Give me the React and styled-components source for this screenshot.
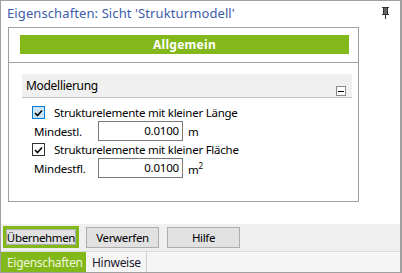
import React, { useState } from 'react'
import styled, { createGlobalStyle, css } from 'styled-components'

const GREEN = '#83b81a'

const GlobalStyle = createGlobalStyle`
    html, body { margin: 0; padding: 0; background: #fff; }
    body {
        font-family: "Noto Sans", "Open Sans", sans-serif;
        font-size: 12px;
        color: #000;
    }
    * { box-sizing: border-box; }
`

const Window = styled.div`
    width: 402px;
    height: 273px;
    border: 1px solid #a0a0a0;
    border-right-width: 2px;
    display: flex;
    flex-direction: column;
    background: #fff;
    overflow: hidden;
`

const TitleBar = styled.div`
    height: 26px;
    flex: none;
    display: flex;
    align-items: center;
    justify-content: space-between;
    padding: 0 11px 2px 6px;
`

const Title = styled.div`
    font-size: 13px;
    letter-spacing: 0.1px;
    color: #3d5ba8;
`

const Body = styled.div`
    flex: 1;
    padding: 0 41px 0 7px;
`

const Panel = styled.div`
    height: 175px;
    border: 1px solid #a0a0a0;
    display: flex;
    flex-direction: column;
`

const Banner = styled.div`
    margin: 7px 9px 0 11px;
    height: 19px;
    background: ${GREEN};
    color: #fff;
    font-weight: bold;
    font-size: 12px;
    display: flex;
    align-items: center;
    justify-content: center;
    letter-spacing: 0.3px;
`

const Divider = styled.div`
    margin-top: 8px;
    border-top: 1px solid #a0a0a0;
`

const Group = styled.div`
    margin: 11px 6px 0 13px;
`

const GroupHeader = styled.div`
    height: 24px;
    background: #f0f0f0;
    border-bottom: 1px solid #c4c4c4;
    display: flex;
    align-items: flex-start;
    justify-content: space-between;
    padding: 3px 6px 0 4px;
    font-size: 12px;
    letter-spacing: -0.3px;
`

const Collapse = styled.span`
    margin-top: 9px;
    width: 10px;
    height: 10px;
    border: 1px solid #8a8a8a;
    background: #fff;
    display: flex;
    align-items: center;
    justify-content: center;
    &::after {
        content: '';
        width: 6px;
        height: 1px;
        background: #000;
    }
`

const Rows = styled.div`
    padding: 7px 0 0 10px;
    display: flex;
    flex-direction: column;
`

const CheckRow = styled.label`
    display: flex;
    align-items: center;
    height: 15px;
    gap: 9px;
    font-size: 11.5px;
    letter-spacing: -0.25px;
`

const Box = styled.span`
    width: 13px;
    height: 13px;
    border: 1px solid #333;
    background: #fff;
    display: flex;
    align-items: center;
    justify-content: center;
    ${(props) => props.focused && css`
        border-color: #0078d7;
        background: #cce4f7;
    `}
`

const FieldRow = styled.div`
    display: flex;
    align-items: center;
    height: 20px;
    margin: 1px 0 1px 2px;
    font-size: 11.5px;
    letter-spacing: -0.2px;
`

const FieldLabel = styled.span`
    width: 64px;
`

const Field = styled.div`
    width: 85px;
    height: 20px;
    border: 1px solid #7a7a7a;
    background: #fff;
    text-align: right;
    padding: 1px 3px 0 0;
`

const Unit = styled.span`
    margin-left: 5px;
    sup { font-size: 8px; vertical-align: 5px; }
`

const ButtonStrip = styled.div`
    height: 27px;
    flex: none;
    background: #efefef;
    display: flex;
    align-items: center;
    padding: 0 0 1px 2px;
    gap: 6px;
`

const Button = styled.button`
    font-family: inherit;
    font-size: 11.5px;
    letter-spacing: -0.35px;
    height: 21px;
    width: ${(props) => props.w}px;
    padding: 0;
    margin-left: ${(props) => props.ml || 0}px;
    background: #e1e1e1;
    border: 1px solid #adadad;
    color: #000;
    display: flex;
    align-items: center;
    justify-content: center;
    ${(props) => props.active && css`
        height: 22px;
        border: 3px solid ${GREEN};
        box-shadow: inset 0 0 0 1px #adadad;
    `}
`

const TabBar = styled.div`
    height: 21px;
    flex: none;
    border-top: 1px solid #d9d9d9;
    background: #f5f5f5;
    display: flex;
`

const Tab = styled.div`
    padding: 0 5px 0 ${(props) => props.active ? 6 : 6}px;
    font-size: 12px;
    letter-spacing: -0.3px;
    display: flex;
    align-items: center;
    height: 20px;
    white-space: nowrap;
    ${(props) => props.active ? css`
        background: ${GREEN};
        color: #eef7dc;
        width: 85px;
    ` : css`
        color: #1a1a2e;
        border-right: 1px solid #d0d0d0;
    `}
`

const Pin = () => (
    <svg width="7" height="12" viewBox="0 0 7 12">
        <path d="M0 0.5H7M1.5 1V7M5.5 1V7M0 7.5H7M3.5 8V12" stroke="#333" strokeWidth="1" fill="none" />
        <rect x="2" y="1" width="3" height="6" fill="#666" />
    </svg>
)

const Tick = () => (
    <svg width="9" height="8" viewBox="0 0 9 8">
        <path d="M1 4L3.5 6.5L8 1.5" stroke="#000" strokeWidth="1.6" fill="none" />
    </svg>
)

export default function App() {
    const [len, setLen] = useState(true)
    const [area, setArea] = useState(true)
    return (
        <>
            <GlobalStyle />
            <Window>
                <TitleBar>
                    <Title>Eigenschaften: Sicht 'Strukturmodell'</Title>
                    <Pin />
                </TitleBar>
                <Body>
                    <Panel>
                        <Banner>Allgemein</Banner>
                        <Divider />
                        <Group>
                            <GroupHeader>
                                <span>Modellierung</span>
                                <Collapse />
                            </GroupHeader>
                            <Rows>
                                <CheckRow onClick={() => setLen(!len)}>
                                    <Box focused>{len && <Tick />}</Box>
                                    Strukturelemente mit kleiner Länge
                                </CheckRow>
                                <FieldRow>
                                    <FieldLabel>Mindestl.</FieldLabel>
                                    <Field>0.0100</Field>
                                    <Unit>m</Unit>
                                </FieldRow>
                                <CheckRow onClick={() => setArea(!area)}>
                                    <Box>{area && <Tick />}</Box>
                                    Strukturelemente mit kleiner Fläche
                                </CheckRow>
                                <FieldRow>
                                    <FieldLabel>Mindestfl.</FieldLabel>
                                    <Field>0.0100</Field>
                                    <Unit>m<sup>2</sup></Unit>
                                </FieldRow>
                            </Rows>
                        </Group>
                    </Panel>
                </Body>
                <ButtonStrip>
                    <Button active w={76}>Übernehmen</Button>
                    <Button w={73} ml={1}>Verwerfen</Button>
                    <Button w={73} ml={2}>Hilfe</Button>
                </ButtonStrip>
                <TabBar>
                    <Tab active>Eigenschaften</Tab>
                    <Tab>Hinweise</Tab>
                </TabBar>
            </Window>
        </>
    )
}
